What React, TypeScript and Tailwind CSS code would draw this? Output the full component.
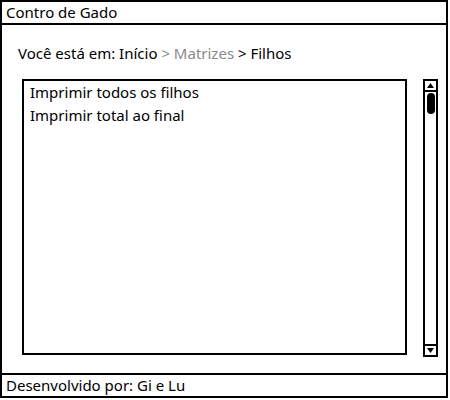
import React from 'react';

const font = { fontFamily: '"Noto Sans", "Open Sans", sans-serif' };

const App: React.FC = () => {
  return (
    <div className="w-[450px] h-[400px] bg-white" style={font}>
      <div className="w-[448px] h-[398px] border-2 border-black flex flex-col text-black text-[15px]">
        <div className="h-[23px] border-b-2 border-black px-[4px] flex items-center leading-none">Contro de Gado</div>
        <div className="flex-1 flex flex-col pl-[20px]">
          <div className="h-[54px] pt-[21px] -ml-[4px] leading-none">
            Você está em: Início <span className="text-[#8a8a8a]">&gt; Matrizes</span> &gt; Filhos
          </div>
          <div className="flex gap-[16px]">
            <div className="w-[385px] h-[276px] border-2 border-black px-[6px] pt-[2px] flex flex-col gap-[5px] leading-[18px]">
              <div>Imprimir todos os filhos</div>
              <div>Imprimir total ao final</div>
            </div>
            <div className="w-[15px] h-[278px] border-2 border-black flex flex-col items-center">
              <div className="w-[11px] h-[11px] border-b-2 border-black flex items-center justify-center">
                <svg width="7" height="5" viewBox="0 0 7 5"><path d="M3.5 0 L7 5 L0 5 Z" fill="black" /></svg>
              </div>
              <div className="w-[8px] h-[21px] mt-[1px] bg-black rounded-full" />
              <div className="flex-1" />
              <div className="w-[11px] h-[11px] border-t-2 border-black flex items-center justify-center">
                <svg width="7" height="5" viewBox="0 0 7 5"><path d="M0 0 L7 0 L3.5 5 Z" fill="black" /></svg>
              </div>
            </div>
          </div>
        </div>
        <div className="h-[23px] border-t-2 border-black px-[4px] flex items-center leading-none">Desenvolvido por: Gi e Lu</div>
      </div>
    </div>
  );
};

export default App;
